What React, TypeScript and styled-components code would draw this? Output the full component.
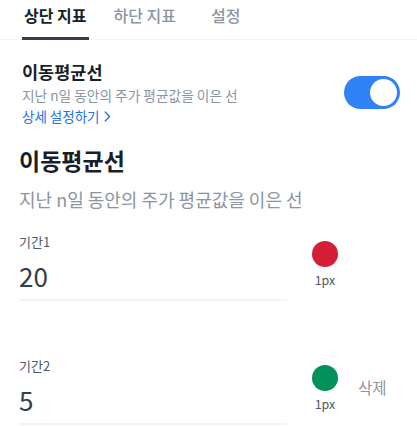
import styled, { createGlobalStyle } from "styled-components";

const GlobalStyle = createGlobalStyle`
  html, body {
    margin: 0;
    padding: 0;
    background: #ffffff;
  }
  body {
    font-family: "Noto Sans CJK KR", "Noto Sans", sans-serif;
    -webkit-font-smoothing: antialiased;
  }
`;

const Page = styled.div`
  width: 417px;
  height: 426px;
  overflow: hidden;
  background: #ffffff;
`;

const TabBar = styled.div`
  display: flex;
  height: 40px;
  box-sizing: border-box;
  padding: 0 22px;
  border-bottom: 1px solid #f2f4f6;
`;

const Tab = styled.div<{ $active?: boolean; $gap: number }>`
  box-sizing: border-box;
  height: 40px;
  margin-left: ${(p) => p.$gap}px;
  padding: 4px 2px 0;
  font-size: 16px;
  line-height: 22px;
  font-weight: ${(p) => (p.$active ? 700 : 500)};
  color: ${(p) => (p.$active ? "#191f28" : "#8b95a1")};
  border-bottom: 3px solid ${(p) => (p.$active ? "#333d4b" : "transparent")};
`;

const IndicatorRow = styled.div`
  display: flex;
  align-items: center;
  justify-content: space-between;
  padding: 20px 17px 0 22px;
`;

const IndicatorText = styled.div`
  display: flex;
  flex-direction: column;
`;

const IndicatorName = styled.div`
  font-size: 17.5px;
  line-height: 24px;
  font-weight: 700;
  color: #191f28;
`;

const IndicatorDesc = styled.div`
  margin-top: 2px;
  font-size: 13.7px;
  line-height: 18px;
  color: #8b95a1;
`;

const DetailLink = styled.a`
  display: flex;
  align-items: center;
  gap: 4px;
  margin-top: 3px;
  font-size: 13.5px;
  line-height: 18px;
  color: #2272eb;
  text-decoration: none;
`;

const Switch = styled.div<{ $on: boolean }>`
  position: relative;
  width: 56px;
  height: 33px;
  border-radius: 17px;
  background: ${(p) => (p.$on ? "#3182f6" : "#e5e8eb")};
  flex-shrink: 0;
`;

const Knob = styled.div<{ $on: boolean }>`
  position: absolute;
  top: 3px;
  left: ${(p) => (p.$on ? "26px" : "3px")};
  width: 27px;
  height: 27px;
  border-radius: 50%;
  background: #ffffff;
`;

const Settings = styled.div`
  padding: 20px 0 0 19px;
`;

const SettingsTitle = styled.div`
  font-size: 23px;
  line-height: 30px;
  font-weight: 700;
  color: #191f28;
`;

const SettingsDesc = styled.div`
  margin-top: 12px;
  font-size: 18px;
  line-height: 24px;
  color: #8b95a1;
`;

const PeriodList = styled.div`
  display: flex;
  flex-direction: column;
  gap: 56px;
  margin-top: 22px;
`;

const PeriodRow = styled.div`
  display: flex;
  align-items: flex-start;
`;

const Field = styled.div`
  width: 268px;
  display: flex;
  flex-direction: column;
  border-bottom: 2px solid #f2f4f6;
  padding-bottom: 6px;
`;

const FieldLabel = styled.div`
  font-size: 13px;
  line-height: 18px;
  color: #4e5968;
`;

const FieldValue = styled.div`
  margin-top: 8px;
  font-size: 26px;
  line-height: 34px;
  font-weight: 400;
  color: #333d4b;
`;

const ColorPicker = styled.div`
  width: 40px;
  margin: 8px 0 0 18px;
  display: flex;
  flex-direction: column;
  align-items: center;
  gap: 5px;
`;

const Swatch = styled.div<{ $color: string }>`
  width: 26px;
  height: 26px;
  border-radius: 50%;
  background: ${(p) => p.$color};
`;

const LineWidth = styled.div`
  font-size: 12.5px;
  line-height: 15px;
  color: #4e5968;
`;

const DeleteButton = styled.button`
  margin: 19px 0 0 13px;
  padding: 0;
  border: none;
  background: none;
  font-family: inherit;
  font-size: 15.5px;
  line-height: 22px;
  color: #8b95a1;
`;

const periods = [
  { label: "기간1", value: "20", color: "#d42034", removable: false },
  { label: "기간2", value: "5", color: "#029158", removable: true },
];

const ChevronRight = () => (
  <svg width="7" height="11" viewBox="0 0 7 11" fill="none">
    <path d="M1.2 1 L5.6 5.5 L1.2 10" stroke="#2272eb" strokeWidth="1.3" strokeLinecap="round" strokeLinejoin="round" />
  </svg>
);

export default function App() {
  return (
    <Page>
      <GlobalStyle />
      <TabBar>
        <Tab $active $gap={0}>상단 지표</Tab>
        <Tab $gap={23}>하단 지표</Tab>
        <Tab $gap={31}>설정</Tab>
      </TabBar>

      <IndicatorRow>
        <IndicatorText>
          <IndicatorName>이동평균선</IndicatorName>
          <IndicatorDesc>지난 n일 동안의 주가 평균값을 이은 선</IndicatorDesc>
          <DetailLink>
            상세 설정하기
            <ChevronRight />
          </DetailLink>
        </IndicatorText>
        <Switch $on>
          <Knob $on />
        </Switch>
      </IndicatorRow>

      <Settings>
        <SettingsTitle>이동평균선</SettingsTitle>
        <SettingsDesc>지난 n일 동안의 주가 평균값을 이은 선</SettingsDesc>
        <PeriodList>
          {periods.map((p) => (
            <PeriodRow key={p.label}>
              <Field>
                <FieldLabel>{p.label}</FieldLabel>
                <FieldValue>{p.value}</FieldValue>
              </Field>
              <ColorPicker>
                <Swatch $color={p.color} />
                <LineWidth>1px</LineWidth>
              </ColorPicker>
              {p.removable && <DeleteButton>삭제</DeleteButton>}
            </PeriodRow>
          ))}
        </PeriodList>
      </Settings>
    </Page>
  );
}
